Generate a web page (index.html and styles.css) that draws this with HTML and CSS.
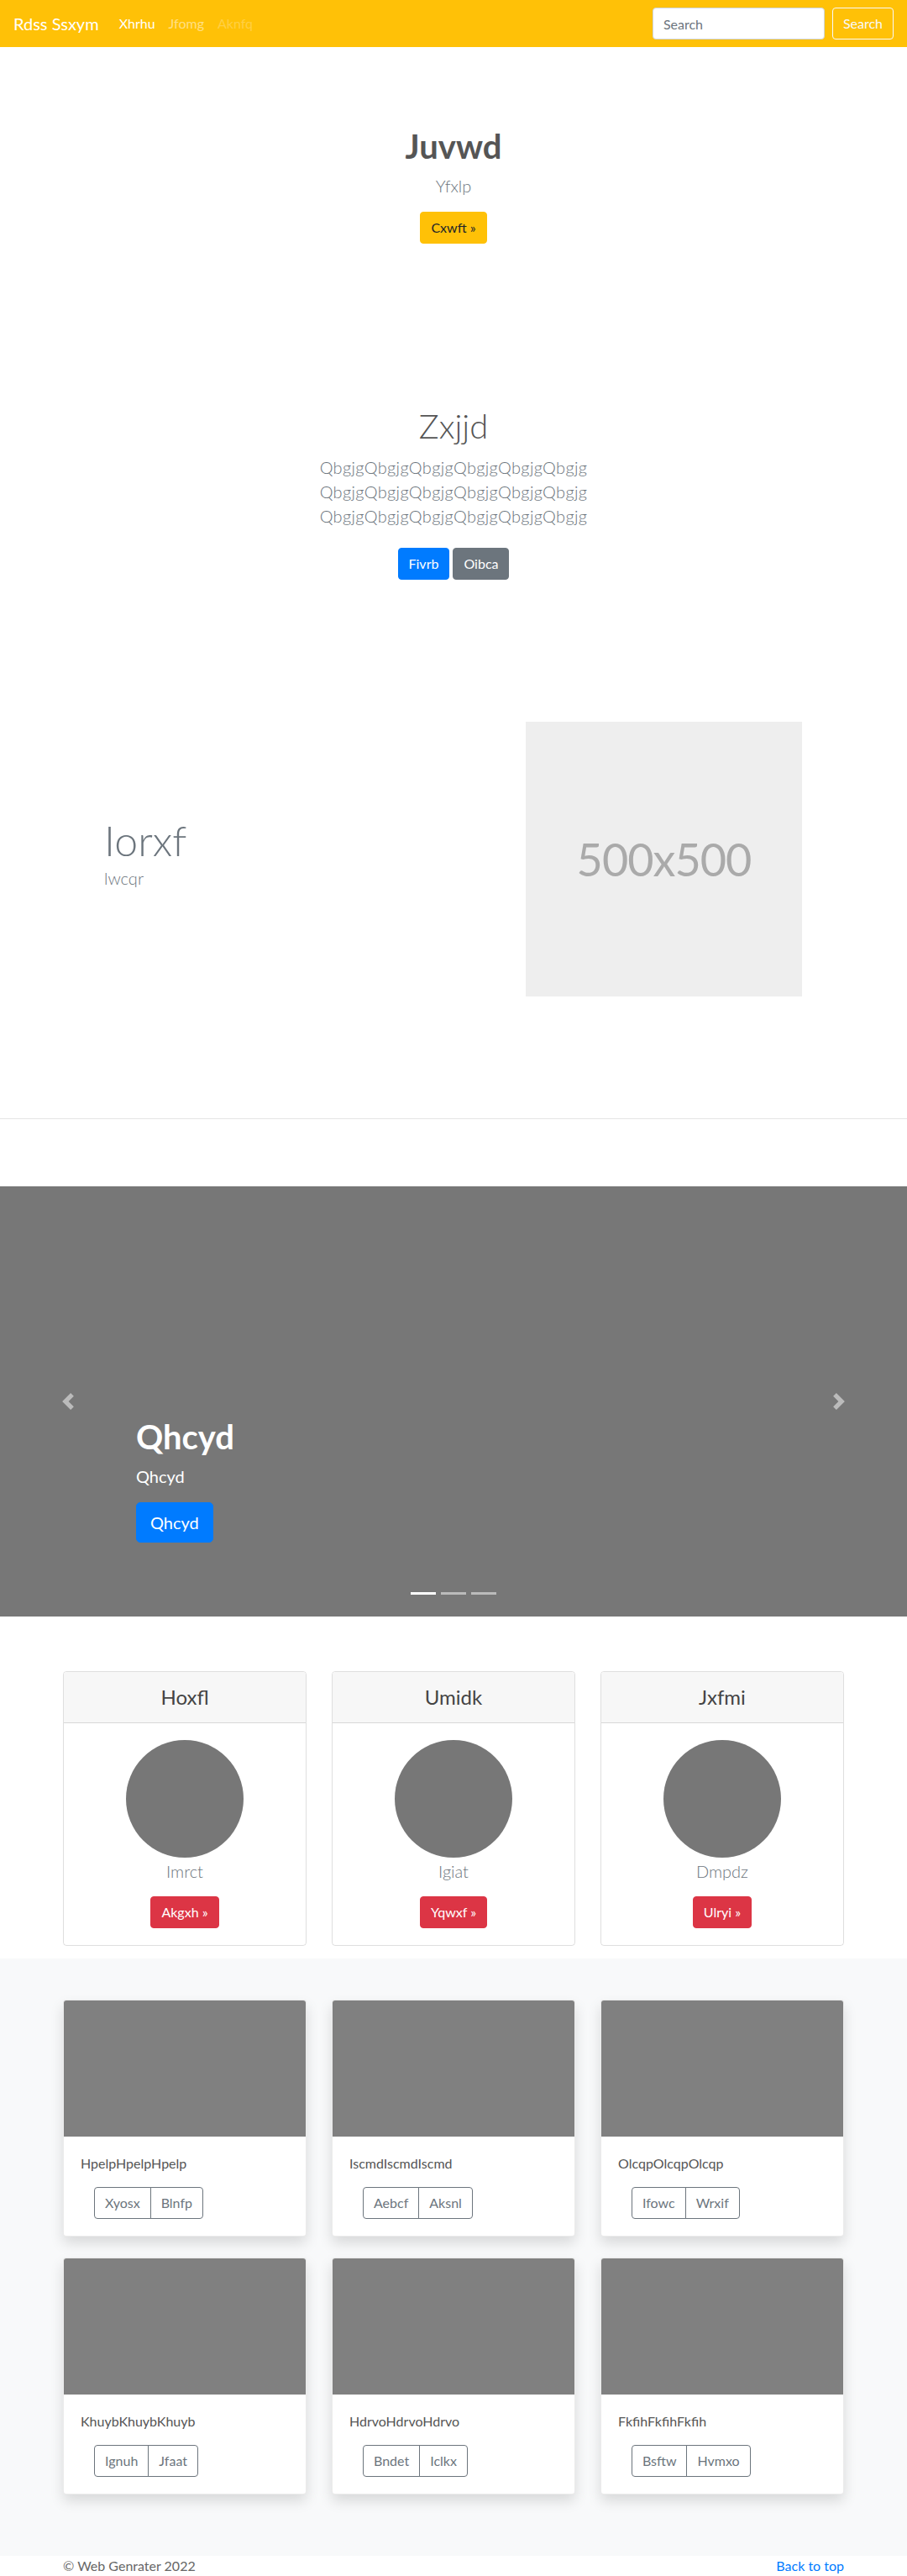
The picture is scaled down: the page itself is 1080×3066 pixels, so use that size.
FILE: index.html
```html
<!DOCTYPE html>
<html lang="en">
<head>
<meta charset="utf-8">
<title>Rdss Ssxym</title>
<link rel="stylesheet" href="styles.css">
</head>
<body>
<nav class="navbar">
  <a class="brand" href="#">Rdss Ssxym</a>
  <ul class="nav">
    <li><a class="nav-link active" href="#">Xhrhu</a></li>
    <li><a class="nav-link" href="#">Jfomg</a></li>
    <li><a class="nav-link disabled" href="#">Aknfq</a></li>
  </ul>
  <form class="search">
    <input class="search-input" type="text" placeholder="Search">
    <button class="btn btn-outline-light" type="button">Search</button>
  </form>
</nav>

<section class="hero hero-one">
  <h1 class="hero-title">Juvwd</h1>
  <p class="lead">Yfxlp</p>
  <a class="btn btn-warning" href="#">Cxwft »</a>
</section>

<section class="hero hero-two">
  <h1 class="hero-title light">Zxjjd</h1>
  <p class="lead lines">QbgjgQbgjgQbgjgQbgjgQbgjgQbgjg<br>QbgjgQbgjgQbgjgQbgjgQbgjgQbgjg<br>QbgjgQbgjgQbgjgQbgjgQbgjgQbgjg</p>
  <div class="btn-row">
    <a class="btn btn-primary" href="#">Fivrb</a>
    <a class="btn btn-secondary" href="#">Oibca</a>
  </div>
</section>

<section class="feature">
  <div class="feature-text">
    <h2 class="feature-title">Iorxf</h2>
    <p class="lead feature-lead">lwcqr</p>
  </div>
  <div class="placeholder">500x500</div>
</section>

<hr class="divider">

<div class="carousel">
  <a class="carousel-control prev" href="#"><svg width="20" height="20" viewBox="0 0 8 8"><path fill="#fff" d="M5.25 0l-4 4 4 4 1.5-1.5L4.25 4l2.5-2.5L5.25 0z"/></svg></a>
  <a class="carousel-control next" href="#"><svg width="20" height="20" viewBox="0 0 8 8"><path fill="#fff" d="M2.75 0l-1.5 1.5L3.75 4l-2.5 2.5L2.75 8l4-4-4-4z"/></svg></a>
  <div class="carousel-caption">
    <h1 class="caption-title">Qhcyd</h1>
    <p class="caption-text">Qhcyd</p>
    <a class="btn btn-lg btn-primary" href="#">Qhcyd</a>
  </div>
  <ol class="indicators">
    <li class="active"></li>
    <li></li>
    <li></li>
  </ol>
</div>

<section class="pricing">
  <div class="card">
    <div class="card-header"><h4>Hoxfl</h4></div>
    <div class="card-body">
      <div class="circle"></div>
      <p class="circle-label">Imrct</p>
      <a class="btn btn-danger" href="#">Akgxh »</a>
    </div>
  </div>
  <div class="card">
    <div class="card-header"><h4>Umidk</h4></div>
    <div class="card-body">
      <div class="circle"></div>
      <p class="circle-label">Igiat</p>
      <a class="btn btn-danger" href="#">Yqwxf »</a>
    </div>
  </div>
  <div class="card">
    <div class="card-header"><h4>Jxfmi</h4></div>
    <div class="card-body">
      <div class="circle"></div>
      <p class="circle-label">Dmpdz</p>
      <a class="btn btn-danger" href="#">Ulryi »</a>
    </div>
  </div>
</section>

<section class="album">
  <div class="album-grid">
    <div class="album-card">
      <div class="album-img"></div>
      <div class="album-body">
        <p class="album-text">HpelpHpelpHpelp</p>
        <div class="btn-group"><a class="btn btn-outline" href="#">Xyosx</a><a class="btn btn-outline" href="#">Blnfp</a></div>
      </div>
    </div>
    <div class="album-card">
      <div class="album-img"></div>
      <div class="album-body">
        <p class="album-text">IscmdIscmdIscmd</p>
        <div class="btn-group"><a class="btn btn-outline" href="#">Aebcf</a><a class="btn btn-outline" href="#">Aksnl</a></div>
      </div>
    </div>
    <div class="album-card">
      <div class="album-img"></div>
      <div class="album-body">
        <p class="album-text">OlcqpOlcqpOlcqp</p>
        <div class="btn-group"><a class="btn btn-outline" href="#">Ifowc</a><a class="btn btn-outline" href="#">Wrxif</a></div>
      </div>
    </div>
    <div class="album-card">
      <div class="album-img"></div>
      <div class="album-body">
        <p class="album-text">KhuybKhuybKhuyb</p>
        <div class="btn-group"><a class="btn btn-outline" href="#">Ignuh</a><a class="btn btn-outline" href="#">Jfaat</a></div>
      </div>
    </div>
    <div class="album-card">
      <div class="album-img"></div>
      <div class="album-body">
        <p class="album-text">HdrvoHdrvoHdrvo</p>
        <div class="btn-group"><a class="btn btn-outline" href="#">Bndet</a><a class="btn btn-outline" href="#">Iclkx</a></div>
      </div>
    </div>
    <div class="album-card">
      <div class="album-img"></div>
      <div class="album-body">
        <p class="album-text">FkfihFkfihFkfih</p>
        <div class="btn-group"><a class="btn btn-outline" href="#">Bsftw</a><a class="btn btn-outline" href="#">Hvmxo</a></div>
      </div>
    </div>
  </div>
</section>

<footer class="footer">
  <p class="copy">© Web Genrater 2022</p>
  <a class="back" href="#">Back to top</a>
</footer>
</body>
</html>
```

FILE: styles.css
```css
* { box-sizing: border-box; }
html, body { margin: 0; padding: 0; }
body {
  font-family: Lato, "Open Sans", sans-serif;
  font-size: 16px;
  line-height: 1.5;
  color: #212529;
  background: #fff;
}
a { text-decoration: none; }
p, h1, h2, h4 { margin: 0; }

/* navbar */
.navbar {
  height: 56px;
  background: #ffc107;
  display: flex;
  align-items: center;
  padding: 0 16px;
}
.brand {
  color: #fff;
  font-size: 20px;
  line-height: 30px;
  margin-right: 16px;
}
.nav {
  list-style: none;
  margin: 0;
  padding: 0;
  display: flex;
  flex: 1;
}
.nav-link {
  display: block;
  padding: 8px;
  color: rgba(255,255,255,.5);
  font-size: 16px;
}
.nav-link.active { color: #fff; }
.nav-link.disabled { color: rgba(255,255,255,.25); }
.search { display: flex; align-items: center; margin: 0; }
.search-input {
  width: 205px;
  height: 38px;
  padding: 6px 12px;
  font-family: inherit;
  font-size: 16px;
  color: #495057;
  border: 1px solid #ced4da;
  border-radius: 4px;
  margin-right: 9px;
  background: #fff;
}
.search-input::placeholder { color: #6c757d; }

/* buttons */
.btn {
  display: inline-block;
  height: 38px;
  padding: 6px 12px;
  font-family: inherit;
  font-size: 16px;
  line-height: 24px;
  border: 1px solid transparent;
  border-radius: 4px;
  text-align: center;
  background: transparent;
}
.btn-outline-light { border-color: #f8f9fa; color: #f8f9fa; }
.btn-warning { background: #ffc107; border-color: #ffc107; color: #212529; }
.btn-primary { background: #007bff; border-color: #007bff; color: #fff; }
.btn-secondary { background: #6c757d; border-color: #6c757d; color: #fff; }
.btn-danger { background: #dc3545; border-color: #dc3545; color: #fff; }
.btn-lg {
  height: 48px;
  padding: 8px 16px;
  font-size: 20px;
  line-height: 30px;
  border-radius: 5px;
}

/* heroes */
.hero { text-align: center; }
.hero-one { padding-top: 94px; }
.hero-two { padding-top: 193px; }
.hero-title {
  font-size: 40px;
  line-height: 48px;
  font-weight: 700;
  color: #555;
  margin-bottom: 8px;
}
.hero-title.light { font-weight: 300; margin-bottom: 11px; }
.lead {
  font-size: 20px;
  font-weight: 300;
  line-height: 30px;
  color: #6c757d;
  margin-bottom: 16px;
}
.lead.lines { line-height: 29px; margin-bottom: 23px; letter-spacing: 0.35px; }
.btn-row { display: flex; justify-content: center; gap: 4px; }

/* feature */
.feature {
  display: flex;
  align-items: center;
  justify-content: space-between;
  padding: 169px 125px 0 124px;
}
.feature-title {
  font-size: 50px;
  font-weight: 300;
  line-height: 60px;
  color: #6c757d;
}
.feature-lead { font-size: 20px; }
.placeholder {
  width: 329px;
  height: 327px;
  background: #eee;
  color: #aaa;
  font-size: 54px;
  letter-spacing: -1px;
  display: flex;
  align-items: center;
  justify-content: center;
}

.divider {
  border: 0;
  border-top: 1px solid #e5e5e5;
  margin: 145px 0 80px;
}

/* carousel */
.carousel {
  position: relative;
  height: 512px;
  background: #777;
}
.carousel-control {
  position: absolute;
  top: 0;
  bottom: 0;
  width: 15%;
  display: flex;
  align-items: center;
  justify-content: center;
  opacity: .5;
}
.carousel-control.prev { left: 0; }
.carousel-control.next { right: 0; }
.carousel-caption {
  position: absolute;
  left: 15%;
  right: 15%;
  top: 274px;
  color: #fff;
}
.caption-title {
  font-size: 40px;
  font-weight: 700;
  line-height: 48px;
  margin-bottom: 8px;
}
.caption-text {
  font-size: 20px;
  line-height: 30px;
  margin-bottom: 16px;
}
.indicators {
  position: absolute;
  left: 0;
  right: 0;
  bottom: 26px;
  margin: 0;
  padding: 0;
  list-style: none;
  display: flex;
  justify-content: center;
}
.indicators li {
  width: 30px;
  height: 3px;
  margin: 0 3px;
  background: rgba(255,255,255,.5);
}
.indicators li.active { background: #fff; }

/* pricing */
.pricing {
  width: 930px;
  margin: 65px auto 15px;
  display: grid;
  grid-template-columns: repeat(3, 1fr);
  gap: 30px;
}
.card {
  border: 1px solid rgba(0,0,0,.125);
  border-radius: 4px;
  text-align: center;
  overflow: hidden;
}
.card-header {
  background: #f7f7f7;
  border-bottom: 1px solid rgba(0,0,0,.125);
  padding: 12px 20px;
}
.card-header h4 {
  font-size: 24px;
  font-weight: 400;
  line-height: 36px;
  color: #444;
}
.card-body { padding: 20px; }
.circle {
  width: 140px;
  height: 140px;
  border-radius: 50%;
  background: #777;
  margin: 0 auto;
}
.circle-label {
  font-size: 20px;
  font-weight: 300;
  line-height: 30px;
  color: #6c757d;
  margin: 1px 0 15px;
}

/* album */
.album {
  background: #f8f9fa;
  padding: 49px 0 73px;
}
.album-grid {
  width: 930px;
  margin: 0 auto;
  display: grid;
  grid-template-columns: repeat(3, 1fr);
  column-gap: 30px;
  row-gap: 25px;
}
.album-card {
  background: #fff;
  border: 1px solid rgba(0,0,0,.08);
  border-radius: 4px;
  overflow: hidden;
  box-shadow: 0 8px 16px rgba(0,0,0,.13);
}
.album-img { height: 162px; background: #808080; }
.album-body { padding: 20px; }
.album-text {
  font-size: 16px;
  line-height: 24px;
  color: #555;
  margin-bottom: 16px;
}
.btn-group { display: flex; margin-left: 16px; }
.btn-outline {
  border-color: #6c757d;
  color: #6c757d;
  height: 38px;
}
.btn-group .btn:first-child { border-radius: 4px 0 0 4px; }
.btn-group .btn:last-child { border-radius: 0 4px 4px 0; margin-left: -1px; }

/* footer */
.footer {
  width: 930px;
  margin: 0 auto;
  display: flex;
  justify-content: space-between;
  line-height: 24px;
  height: 24px;
}
.copy { color: #666; }
.back { color: #007bff; }
```
